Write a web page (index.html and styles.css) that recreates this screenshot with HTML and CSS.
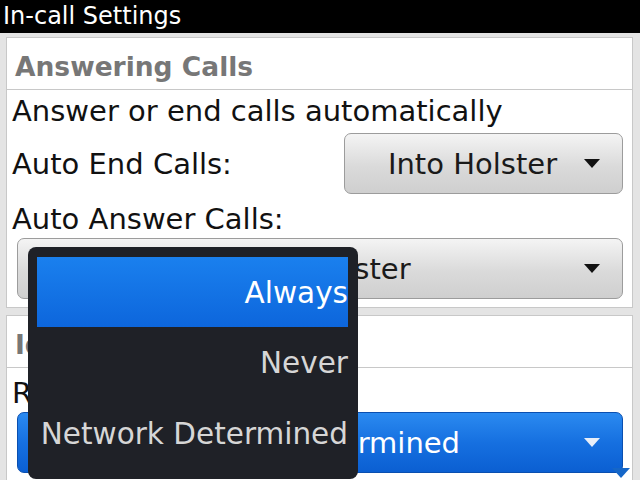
FILE: index.html
```html
<!DOCTYPE html>
<html lang="en">
  <head>
    <meta charset="UTF-8" />
    <title>In-call Settings</title>
    <link rel="stylesheet" href="styles.css">
  </head>
  <body>
    <div class="screen">
      <div class="title-bar">In-call Settings</div>

      <div class="content">
        <div class="panel">
          <div class="section-title">Answering Calls</div>
          <div class="text-row">Answer or end calls automatically</div>
          <div class="field-row">
            <span class="label">Auto End Calls:</span>
            <div class="dropdown small">
              <span class="dropdown-text">Into Holster</span>
              <span class="arrow"></span>
            </div>
          </div>
          <div class="text-row label-row">Auto Answer Calls:</div>
          <div class="dropdown wide holster">
            <span class="dropdown-text">Into Holster</span>
            <span class="arrow"></span>
          </div>
        </div>

        <div class="panel second">
          <div class="section-title">Identity</div>
          <div class="text-row label-row">Restrict My Identity:</div>
          <div class="dropdown wide focused">
            <span class="dropdown-text">Network Determined</span>
            <span class="arrow"></span>
          </div>
        </div>
      </div>

      <!-- choice list opened over the form -->
      <ul class="popup">
        <li class="selected">Always</li>
        <li>Never</li>
        <li>Network Determined</li>
      </ul>

      <span class="scroll-arrow"></span>
    </div>
  </body>
</html>
```

FILE: styles.css
```css
* {
  margin: 0;
  padding: 0;
  box-sizing: border-box;
}

body {
  font-family: "DejaVu Sans", "Liberation Sans", sans-serif;
  background: #000;
}

.screen {
  position: relative;
  width: 640px;
  height: 480px;
  overflow: hidden;
  background: #e4e4e4;
}

.title-bar {
  height: 33px;
  background: #000;
  color: #fff;
  font-size: 24px;
  line-height: 33px;
  padding-left: 3px;
}

.content {
  display: flex;
  flex-direction: column;
  gap: 7px;
  padding: 4px 7px 0 6px;
}

.panel {
  background: #fff;
  border: 1px solid #c8c8c8;
  padding-bottom: 8px;
}

.section-title {
  height: 52px;
  border-bottom: 1px solid #c8c8c8;
  padding-left: 8px;
  font-size: 26.5px;
  font-weight: bold;
  color: #777;
  line-height: 58px;
}

.text-row {
  height: 43px;
  line-height: 42px;
  padding-left: 5px;
  font-size: 29px;
  color: #111;
}

.label-row {
  height: 44px;
  line-height: 50px;
}

.field-row {
  display: flex;
  align-items: center;
  justify-content: space-between;
  padding: 0 9px 0 5px;
  font-size: 29px;
  color: #111;
}

.dropdown {
  display: flex;
  align-items: center;
  height: 61px;
  padding: 0 22px 0 16px;
  border: 1px solid #9c9c9c;
  border-radius: 7px;
  background: linear-gradient(#f4f4f4, #dadada 55%, #cfcfcf);
  color: #1a1a1a;
  font-size: 29px;
}

.dropdown.small {
  width: 279px;
}

.dropdown.wide {
  margin: 0 9px 0 10px;
}

.dropdown.holster {
  padding-left: 50px;
}

.dropdown.focused {
  border-color: #0a4fb0;
  background: linear-gradient(#2b8af0, #1670e0 50%, #0b5fd2);
  color: #fff;
}

.dropdown-text {
  flex: 1;
  text-align: center;
  white-space: nowrap;
}

.arrow {
  width: 0;
  height: 0;
  border-left: 8px solid transparent;
  border-right: 8px solid transparent;
  border-top: 9px solid #111;
}

.dropdown.focused .arrow {
  border-top-color: #e8eef8;
}

.popup {
  position: absolute;
  left: 28px;
  top: 247px;
  width: 330px;
  height: 232px;
  list-style: none;
  background: #1f2127;
  border-radius: 8px;
  padding: 10px 10px 0 9px;
}

.popup li {
  height: 71px;
  line-height: 72px;
  text-align: right;
  font-size: 29.5px;
  color: #d6d6d6;
  white-space: nowrap;
}

.popup li.selected {
  height: 70px;
  background: linear-gradient(#1a80ee, #0d66dc);
  color: #fff;
}

.scroll-arrow {
  position: absolute;
  left: 612px;
  top: 468px;
  width: 0;
  height: 0;
  border-left: 9px solid transparent;
  border-right: 9px solid transparent;
  border-top: 10px solid #1566c8;
}
```
